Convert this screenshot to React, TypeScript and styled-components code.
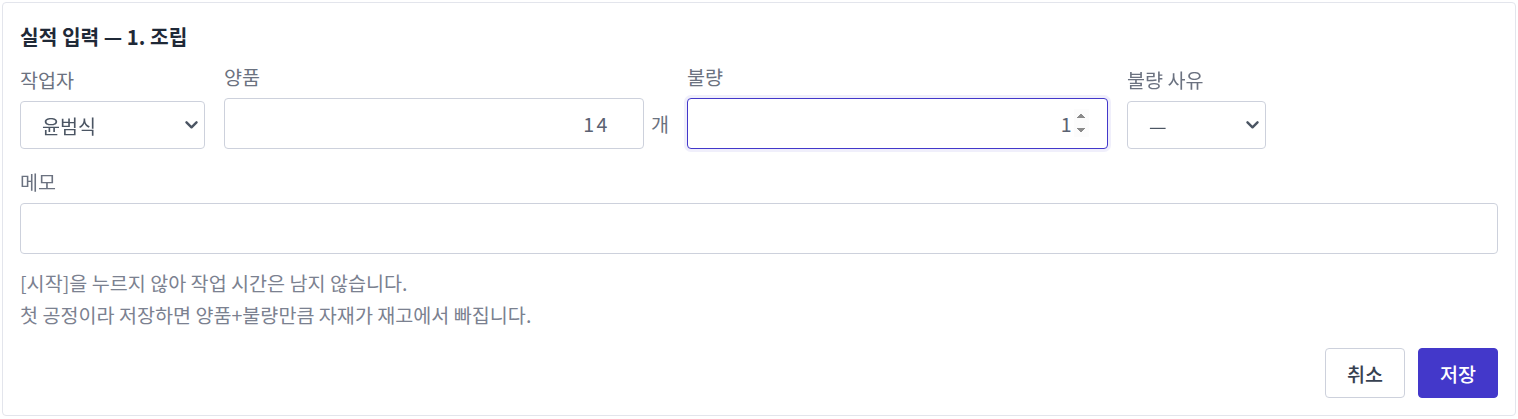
import React from 'react';
import styled, { createGlobalStyle, css } from 'styled-components';

const GlobalStyle = createGlobalStyle`
  body {
    margin: 0;
    background: #ffffff;
    font-family: 'Noto Sans CJK KR', 'Noto Sans', sans-serif;
  }
  * {
    box-sizing: border-box;
  }
`;

const TEXT_SIZE = '19.6px';

const fieldText = css`
  font-family: 'Noto Sans CJK KR', 'Noto Sans', sans-serif;
  font-size: ${TEXT_SIZE};
  color: #4b5563;
`;

const Card = styled.section`
  margin: 2px;
  padding: 17px;
  background: #fff;
  border: 1px solid #e3e5ec;
  border-radius: 4px;
`;

const Title = styled.h2`
  margin: 2px 0 16px;
  font-size: 20.3px;
  line-height: 28px;
  font-weight: 700;
  color: #1f2937;
`;

const Row = styled.div`
  display: flex;
  align-items: flex-end;
  gap: 19px;
`;

const Field = styled.label<{ $width?: number }>`
  display: flex;
  flex-direction: column;
  gap: 10px;
  width: ${(p) => (p.$width ? `${p.$width}px` : 'auto')};
  flex: 0 0 auto;
`;

const Label = styled.span`
  font-size: ${TEXT_SIZE};
  line-height: 22px;
  color: #6b7280;
`;

const SelectWrap = styled.div`
  position: relative;
`;

const Select = styled.select`
  ${fieldText};
  appearance: none;
  width: 100%;
  height: 48px;
  padding: 0 30px 0 21px;
  background: #fff;
  border: 1px solid #cdd1dc;
  border-radius: 4px;
  outline: none;
`;

const Chevron = styled.svg`
  position: absolute;
  right: 7px;
  top: 50%;
  transform: translateY(-50%);
  pointer-events: none;
`;

const UnitGroup = styled.div`
  display: flex;
  align-items: center;
  gap: 7px;
`;

const Unit = styled.span`
  font-size: ${TEXT_SIZE};
  color: #6b7280;
  line-height: 22px;
  margin-right: -1px;
`;

const NumberInput = styled.input<{ $focused?: boolean; $width: number }>`
  ${fieldText};
  width: ${(p) => p.$width}px;
  height: 51px;
  padding: 0 18px 0 12px;
  text-align: right;
  letter-spacing: 2.5px;
  color: #5b6272;
  background: #fff;
  border: 1px solid #cdd1dc;
  border-radius: 4px;
  outline: none;
  ${(p) =>
    p.$focused &&
    css`
      border-color: #4338ca;
      box-shadow: 0 0 0 3px rgba(67, 56, 202, 0.08);
    `}
  &:focus {
    border-color: #4338ca;
    box-shadow: 0 0 0 3px rgba(67, 56, 202, 0.08);
  }
`;

const MemoField = styled(Field)`
  margin-top: 22px;
`;

const TextInput = styled.input`
  ${fieldText};
  width: 100%;
  height: 51px;
  padding: 0 16px;
  background: #fff;
  border: 1px solid #cdd1dc;
  border-radius: 4px;
  outline: none;
`;

const Notes = styled.div`
  margin-top: 17px;
  display: flex;
  flex-direction: column;
  gap: 8px;
`;

const Note = styled.p`
  margin: 0;
  font-size: ${TEXT_SIZE};
  line-height: 24px;
  color: #7b8190;
`;

const Actions = styled.div`
  margin-top: 21px;
  display: flex;
  justify-content: flex-end;
  gap: 13px;
`;

const Button = styled.button<{ $primary?: boolean }>`
  font-family: 'Noto Sans CJK KR', 'Noto Sans', sans-serif;
  width: 80px;
  height: 50px;
  font-size: ${TEXT_SIZE};
  font-weight: 500;
  border-radius: 4px;
  cursor: pointer;
  ${(p) =>
    p.$primary
      ? css`
          background: #4338ca;
          border: 1px solid #4338ca;
          color: #fff;
        `
      : css`
          background: #fff;
          border: 1px solid #cdd1dc;
          color: #374151;
        `}
`;

const ChevronIcon = () => (
  <Chevron width="13" height="9" viewBox="0 0 13 9" fill="none">
    <path d="M1.5 1.8 6.5 6.8 11.5 1.8" stroke="#4b5563" strokeWidth="2.4" strokeLinecap="round" strokeLinejoin="round" />
  </Chevron>
);

export default function App() {
  return (
    <>
      <GlobalStyle />
      <Card>
        <Title>실적 입력 — 1. 조립</Title>
        <Row>
          <Field $width={185}>
            <Label>작업자</Label>
            <SelectWrap>
              <Select defaultValue="윤범식">
                <option>윤범식</option>
              </Select>
              <ChevronIcon />
            </SelectWrap>
          </Field>
          <Field>
            <Label>양품</Label>
            <UnitGroup>
              <NumberInput type="number" defaultValue={14} $width={420} />
              <Unit>개</Unit>
            </UnitGroup>
          </Field>
          <Field>
            <Label>불량</Label>
            <NumberInput type="number" defaultValue={1} $width={421} $focused autoFocus />
          </Field>
          <Field $width={139}>
            <Label>불량 사유</Label>
            <SelectWrap>
              <Select defaultValue="—">
                <option>—</option>
              </Select>
              <ChevronIcon />
            </SelectWrap>
          </Field>
        </Row>
        <MemoField>
          <Label>메모</Label>
          <TextInput type="text" />
        </MemoField>
        <Notes>
          <Note>[시작]을 누르지 않아 작업 시간은 남지 않습니다.</Note>
          <Note>첫 공정이라 저장하면 양품+불량만큼 자재가 재고에서 빠집니다.</Note>
        </Notes>
        <Actions>
          <Button>취소</Button>
          <Button $primary>저장</Button>
        </Actions>
      </Card>
    </>
  );
}
